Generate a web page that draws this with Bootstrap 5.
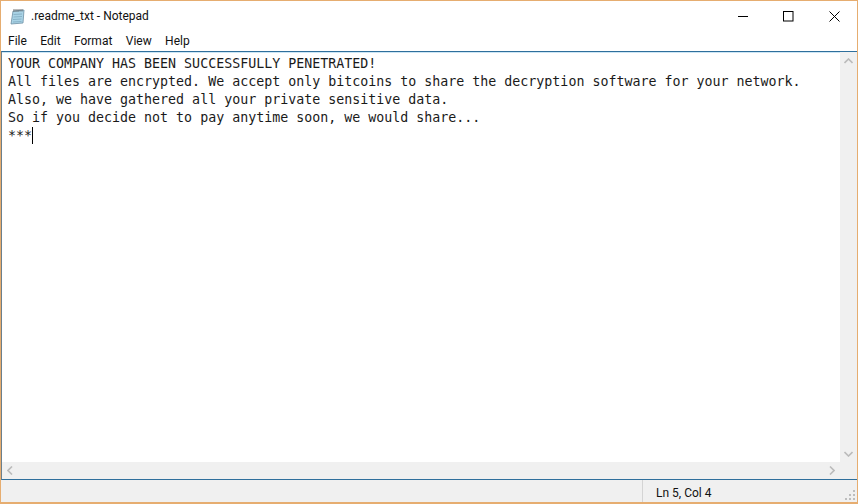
<!DOCTYPE html>
<html lang="en">
<head>
    <meta charset="UTF-8">
    <title>.readme_txt - Notepad</title>
    <link href="https://cdn.jsdelivr.net/npm/bootstrap@5.3.0/dist/css/bootstrap.min.css" rel="stylesheet">
    <style>
        html, body { height: 100%; margin: 0; overflow: hidden; background: #fff; }
        body { font-family: Roboto, "Open Sans", sans-serif; font-size: 12px; color: #111; }

        .np-window { height: 504px; border: 1px solid #e6ad70; border-bottom-width: 2px; }
        .np-title { height: 30px; padding-left: 9px; font-size: 12px; }
        .np-title svg.np-icon { margin-right: 5px; }
        .np-caps button { width: 45.5px; height: 30px; border: 0; padding: 0; background: none; display: flex; align-items: center; justify-content: center; }
        .np-menu { height: 20px; padding-left: 7px; gap: 13.4px; font-size: 12px; }
        .np-menu span { display: block; }

        .np-edit { border-top: 1px solid #2f6f9c; border-bottom: 1px solid #2f6f9c; border-left: 1px solid #6b7f8c; box-shadow: inset 0 1px 0 #cde6f5; min-height: 0; }
        .np-body { min-height: 0; }
        .np-text { padding: 3px 0 0 6px; font-family: "DejaVu Sans Mono", "Liberation Mono", monospace; font-size: 13.3px; line-height: 18px; color: #1a1a1a; white-space: pre; overflow: hidden; }
        .np-caret { display: inline-block; width: 1px; height: 17px; background: #000; vertical-align: -4px; }

        .np-vbar { width: 17px; background: #f0f0f0; }
        .np-hbar { height: 17px; background: #f0f0f0; padding: 0 5px 0 5px; }
        .np-vbar .np-arrow { height: 17px; }
        .np-corner { width: 17px; background: #f0f0f0; }

        .np-status { height: 22px; background: #f0f0f0; font-size: 12px; }
        .np-pos { width: 215px; height: 100%; border-left: 1px solid #d4d4d4; padding: 4px 0 0 13px; }
        .np-grip { position: absolute; right: 1px; bottom: 1px; }
    </style>
</head>
<body>
    <div class="np-window d-flex flex-column">
        <!-- title bar -->
        <div class="np-title d-flex align-items-center flex-shrink-0">
            <svg class="np-icon" width="16" height="17" viewBox="0 0 16 17">
                <path d="M3 3 L14 2 L13 15 L1 16 Z" fill="#a9d3e6" stroke="#6d8fa3" stroke-width="0.8"/>
                <path d="M3.5 6.5 L12 6 M3.5 9 L12 8.5 M3 11.5 L11.5 11 M3 14 L11.5 13.5" stroke="#7fa9bf" stroke-width="0.8"/>
                <path d="M4 1 V4 M6 1 V4 M8 1 V4 M10 1 V3.5 M12 1 V3.5" stroke="#555" stroke-width="0.8"/>
            </svg>
            <span class="flex-grow-1">.readme_txt - Notepad</span>
            <div class="np-caps d-flex">
                <button type="button" aria-label="Minimize"><svg width="11" height="11"><path d="M0 5.5H10" stroke="#000"/></svg></button>
                <button type="button" aria-label="Maximize"><svg width="11" height="11"><rect x="0.5" y="0.5" width="9.5" height="9.5" fill="none" stroke="#000"/></svg></button>
                <button type="button" aria-label="Close"><svg width="11" height="11"><path d="M0.5 0.5L10.5 10.5M10.5 0.5L0.5 10.5" stroke="#000"/></svg></button>
            </div>
        </div>
        <!-- menu -->
        <div class="np-menu d-flex align-items-center flex-shrink-0">
            <span>File</span><span>Edit</span><span>Format</span><span>View</span><span>Help</span>
        </div>
        <!-- edit area -->
        <div class="np-edit d-flex flex-column flex-grow-1">
            <div class="np-body d-flex flex-grow-1">
                <div class="np-text flex-grow-1">YOUR COMPANY HAS BEEN SUCCESSFULLY PENETRATED!
All files are encrypted. We accept only bitcoins to share the decryption software for your network.
Also, we have gathered all your private sensitive data.
So if you decide not to pay anytime soon, we would share...
***<span class="np-caret"></span></div>
                <div class="np-vbar d-flex flex-column justify-content-between">
                    <div class="np-arrow d-flex align-items-center justify-content-center"><svg width="9" height="6"><path d="M0.5 5L4.5 1L8.5 5" fill="none" stroke="#bbb" stroke-width="1.6"/></svg></div>
                    <div class="np-arrow d-flex align-items-center justify-content-center"><svg width="9" height="6"><path d="M0.5 1L4.5 5L8.5 1" fill="none" stroke="#bbb" stroke-width="1.6"/></svg></div>
                </div>
            </div>
            <div class="d-flex flex-shrink-0">
                <div class="np-hbar d-flex align-items-center justify-content-between flex-grow-1">
                    <svg width="6" height="9"><path d="M5 0.5L1 4.5L5 8.5" fill="none" stroke="#bbb" stroke-width="1.6"/></svg>
                    <svg width="6" height="9"><path d="M1 0.5L5 4.5L1 8.5" fill="none" stroke="#bbb" stroke-width="1.6"/></svg>
                </div>
                <div class="np-corner"></div>
            </div>
        </div>
        <!-- status bar -->
        <div class="np-status d-flex justify-content-end flex-shrink-0 position-relative">
            <div class="np-pos">Ln 5, Col 4</div>
            <svg class="np-grip" width="11" height="11" fill="#bdbdbd"><rect x="8" y="0" width="2" height="2"/><rect x="4" y="4" width="2" height="2"/><rect x="8" y="4" width="2" height="2"/><rect x="0" y="8" width="2" height="2"/><rect x="4" y="8" width="2" height="2"/><rect x="8" y="8" width="2" height="2"/></svg>
        </div>
    </div>
    <script src="https://cdn.jsdelivr.net/npm/bootstrap@5.3.0/dist/js/bootstrap.bundle.min.js"></script>
</body>
</html>
